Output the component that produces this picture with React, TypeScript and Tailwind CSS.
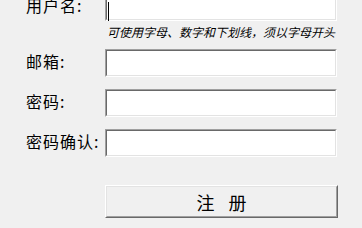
import React from 'react';

const font = { fontFamily: '"Noto Sans CJK SC", "Noto Sans", sans-serif' };

function Field({ caret = false }: { caret?: boolean }) {
  return (
    <div className="h-[28px] w-[232px] border-t border-l border-t-[#a0a0a0] border-l-[#a0a0a0] border-b border-r border-b-white border-r-white">
      <div className="h-full w-full border-t border-l border-t-[#696969] border-l-[#696969] border-b border-r border-b-[#e3e3e3] border-r-[#e3e3e3] bg-white flex items-stretch pl-[1px] py-[1px]">
        {caret && <div className="w-[1px] h-[19px] mt-[6px] bg-black" />}
      </div>
    </div>
  );
}

function Row({ label, caret }: { label: string; caret?: boolean }) {
  return (
    <div className="flex items-center">
      <div className="w-[79px] text-[16px] leading-[16px] tracking-[1px] text-black mb-[5px] whitespace-nowrap">{label}</div>
      <Field caret={caret} />
    </div>
  );
}

export default function App() {
  return (
    <div className="w-[362px] h-[228px] bg-[#f0f0f0] overflow-hidden" style={font}>
      <div className="pl-[26px] mt-[-7px] flex flex-col">
        <Row label="用户名:" caret />
        <div className="pl-[81px] mt-[4px] h-[14px] text-[12px] leading-[14px] italic text-black whitespace-nowrap">
          可使用字母、数字和下划线，须以字母开头
        </div>
        <div className="mt-[10px] flex flex-col gap-[12px]">
          <Row label="邮箱:" />
          <Row label="密码:" />
          <Row label="密码确认:" />
        </div>
        <div className="pl-[79px] mt-[28px]">
          <button className="h-[33px] w-[233px] border-t border-l border-t-white border-l-white border-b border-r border-b-[#696969] border-r-[#696969] bg-[#f0f0f0] p-0">
            <div className="h-full w-full border-t border-l border-t-[#e3e3e3] border-l-[#e3e3e3] border-b border-r border-b-[#a0a0a0] border-r-[#a0a0a0] flex items-center justify-center gap-[14px] text-[18px] leading-[18px] text-black">
              <span>注</span>
              <span>册</span>
            </div>
          </button>
        </div>
      </div>
    </div>
  );
}
